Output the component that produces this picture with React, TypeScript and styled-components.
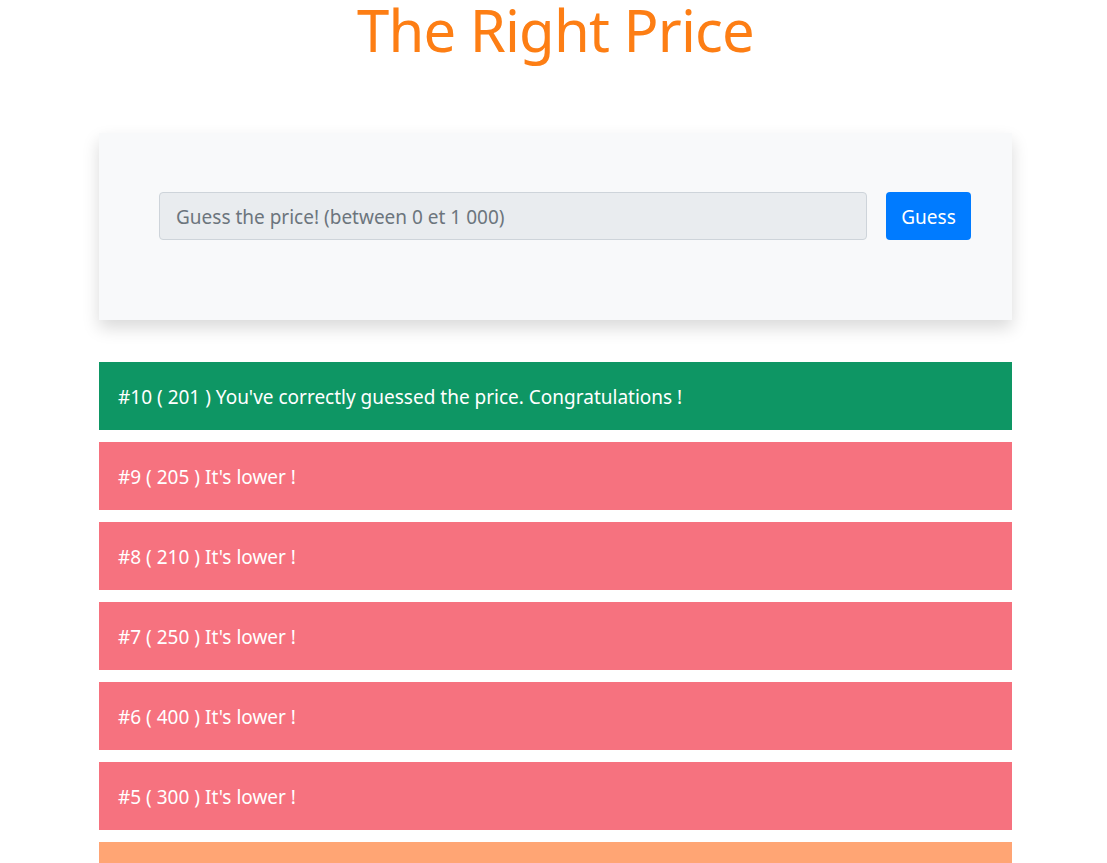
import React from "react";
import styled, { createGlobalStyle } from "styled-components";

const Global = createGlobalStyle`
  html, body { margin: 0; padding: 0; background: #fff; }
  body { font-family: "Noto Sans", "Open Sans", sans-serif; }
  * { box-sizing: border-box; }
`;

const Page = styled.div`
  width: 913px;
  margin: 0 auto 0 99px;
  display: flex;
  flex-direction: column;
`;

const Title = styled.h1`
  margin: 0 0 74px;
  text-align: center;
  color: #fd7e14;
  font-weight: 400;
  font-size: 58px;
  line-height: 59px;
  letter-spacing: -0.8px;
`;

const Card = styled.div`
  background: #f8f9fa;
  box-shadow: 0 8px 16px rgba(0, 0, 0, 0.15);
  padding: 59px 41px 80px 60px;
  display: flex;
  gap: 19px;
`;

const Input = styled.input`
  flex: 1;
  height: 48px;
  background: #e9ecef;
  border: 1px solid #ced4da;
  border-radius: 4px;
  padding: 2px 16px 0;
  font-family: inherit;
  font-size: 19px;
  color: #495057;
  &::placeholder { color: #6c757d; }
`;

const Button = styled.button`
  height: 48px;
  width: 85px;
  background: #007bff;
  color: #fff;
  border: none;
  border-radius: 4px;
  padding: 2px 0 0;
  font-family: inherit;
  font-size: 19px;
`;

const List = styled.div`
  margin-top: 42px;
  display: flex;
  flex-direction: column;
  gap: 12px;
`;

const colors = { success: "#0e9664", lower: "#f6727f", higher: "#ffa574" };

const Row = styled.div<{ $kind: keyof typeof colors }>`
  height: 68px;
  background: ${(p) => colors[p.$kind]};
  color: #fff;
  font-size: 19px;
  padding: 2px 19px 0;
  display: flex;
  align-items: center;
`;

const rows: { n: number; v: number; kind: keyof typeof colors; msg: string }[] = [
  { n: 10, v: 201, kind: "success", msg: "You've correctly guessed the price. Congratulations !" },
  { n: 9, v: 205, kind: "lower", msg: "It's lower !" },
  { n: 8, v: 210, kind: "lower", msg: "It's lower !" },
  { n: 7, v: 250, kind: "lower", msg: "It's lower !" },
  { n: 6, v: 400, kind: "lower", msg: "It's lower !" },
  { n: 5, v: 300, kind: "lower", msg: "It's lower !" },
  { n: 4, v: 100, kind: "higher", msg: "It's higher !" },
];

export default function App() {
  return (
    <>
      <Global />
      <Page>
        <Title>The Right Price</Title>
        <Card>
          <Input placeholder="Guess the price! (between 0 et 1 000)" />
          <Button>Guess</Button>
        </Card>
        <List>
          {rows.map((r) => (
            <Row key={r.n} $kind={r.kind}>
              #{r.n} ( {r.v} ) {r.msg}
            </Row>
          ))}
        </List>
      </Page>
    </>
  );
}
